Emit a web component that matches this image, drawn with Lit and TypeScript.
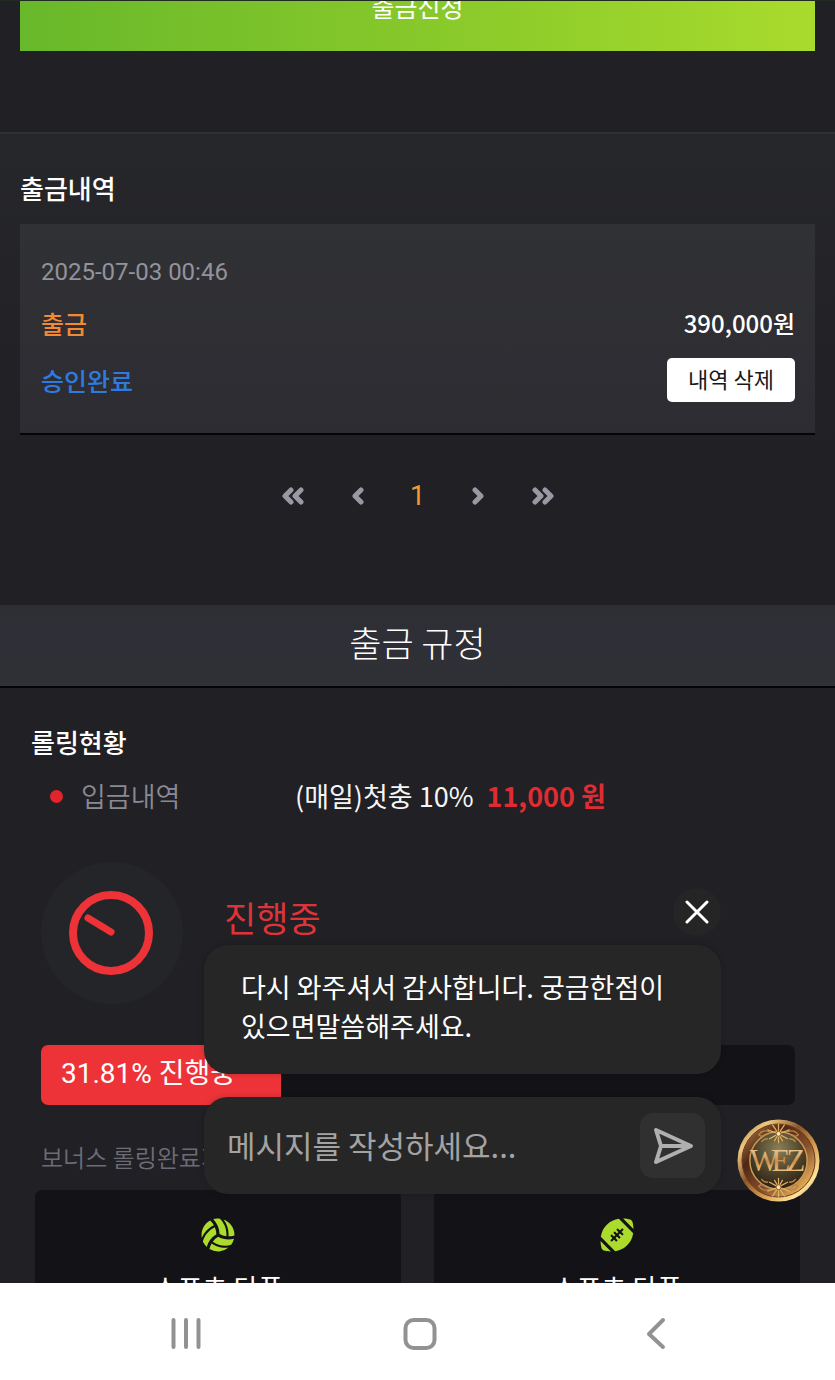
import { LitElement, html, svg, css } from "lit";
import { customElement, property } from "lit/decorators.js";

const VOLLEYBALL =
  "M231.39 243.48a285.56 285.56 0 0 0-22.7-105.7c-90.8 42.4-157.5 122.4-180.3 216.8a249 249 0 0 0 56.9 81.1 333.87 333.87 0 0 1 146.1-192.2zm-36.9-134.4a284.23 284.23 0 0 0-57.4-70.7c-91 49.8-144.8 152.9-125 262.2 33.4-83.1 98.4-152 182.4-191.5zm187.6 165.1c8.6-99.8-27.3-197.5-97.5-264.4-14.7-1.7-51.6-5.5-98.9 8.5A333.87 333.87 0 0 1 279.19 241a285 285 0 0 0 102.9 33.18zm-124.7 9.5a286.33 286.33 0 0 0-80.2 72.6c82 57.3 184.5 75.1 277.5 47.8a247.15 247.15 0 0 0 42.2-89.9 336.1 336.1 0 0 1-80.9 10.4c-54.6-.1-108.9-14.1-158.6-40.9zm-98.3 99.7c-15.2 26-25.7 54.4-32.1 84.2a247.07 247.07 0 0 0 289-22.1c-112.9 16.1-203.3-24.8-256.9-62.1zm180.3-360.6c55.3 70.4 82.5 161.2 74.6 253.6a286.59 286.59 0 0 0 89.7-14.2c0-2 .3-4 .3-6 0-107.8-68.7-199.1-164.6-233.4z";
const FOOTBALL =
  "M481.5 60.3c-4.8-18.2-19.1-32.5-37.3-37.4C420.3 16.5 383 8.9 339.4 8L496 164.8c-.8-43.5-8.2-80.6-14.5-104.5zm-467 391.4c4.8 18.2 19.1 32.5 37.3 37.4 23.9 6.4 61.2 14 104.8 14.9L0 347.2c.8 43.5 8.2 80.6 14.5 104.5zM4.2 283.4L220.4 500c132.5-19.4 248.8-118.7 271.5-271.4L275.6 12C143.1 31.4 26.8 130.7 4.2 283.4zm317.3-123.6c3.1-3.1 8.2-3.1 11.3 0l11.3 11.3c3.1 3.1 3.1 8.2 0 11.3l-28.3 28.3 28.3 28.3c3.1 3.1 3.1 8.2 0 11.3l-11.3 11.3c-3.1 3.1-8.2 3.1-11.3 0l-28.3-28.3-22.6 22.7 28.3 28.3c3.1 3.1 3.1 8.2 0 11.3l-11.3 11.3c-3.1 3.1-8.2 3.1-11.3 0L248 278.6l-22.6 22.6 28.3 28.3c3.1 3.1 3.1 8.2 0 11.3l-11.3 11.3c-3.1 3.1-8.2 3.1-11.3 0l-28.3-28.3-28.3 28.3c-3.1 3.1-8.2 3.1-11.3 0l-11.3-11.3c-3.1-3.1-3.1-8.2 0-11.3l28.3-28.3-28.3-28.2c-3.1-3.1-3.1-8.2 0-11.3l11.3-11.3c3.1-3.1 8.2-3.1 11.3 0l28.3 28.3 22.6-22.6-28.3-28.3c-3.1-3.1-3.1-8.2 0-11.3l11.3-11.3c3.1-3.1 8.2-3.1 11.3 0l28.3 28.3 22.6-22.6-28.3-28.3c-3.1-3.1-3.1-8.2 0-11.3l11.3-11.3c3.1-3.1 8.2-3.1 11.3 0l28.3 28.3z";

const chevron = (d: string, width: number) => html`
  <svg width=${width} height="18" viewBox="0 0 ${width} 18" fill="none" stroke="currentColor"
    stroke-width="5" stroke-linecap="round" stroke-linejoin="round" aria-hidden="true">
    <path d=${d} />
  </svg>`;

const reset = css`
  * { box-sizing: border-box; }
  h2, h3, p, ul, dl, dd { margin: 0; padding: 0; }
  button, input { font: inherit; border: 0; padding: 0; margin: 0; background: none; }
  button { cursor: pointer; }
  svg { display: block; }
`;

@customElement("withdraw-history")
class WithdrawHistory extends LitElement {
  static styles = [reset, css`
    :host { display: block; padding: 34px 20px 0; }
    .heading { font-size: 26px; line-height: 40px; font-weight: 500; color: #fff; }
    .card {
      display: grid; gap: 17px; margin-top: 16px; padding: 32px 20px 31px 21px;
      background: linear-gradient(#303135, #2d2c32); border-bottom: 2px solid #050508;
    }
    .row { display: flex; justify-content: space-between; align-items: center; }
    .date { font: 24px/32px Roboto, sans-serif; color: #93939b; }
    .kind, .state { font-size: 25px; line-height: 36px; font-weight: 500; }
    .kind { color: #f28a35; }
    .state { color: #2e7be0; }
    .amount { font-size: 24px; line-height: 36px; font-weight: 500; color: #fff; }
    .remove {
      padding: 2px 21px 6px; border-radius: 5px; background: #fff; color: #18181b;
      font-size: 22px; line-height: 36px;
    }
    .pages { display: flex; justify-content: center; align-items: center; padding: 41px 0 89px; }
    .page {
      display: grid; place-items: center; width: 60px; height: 40px;
      color: #9a99a3; text-decoration: none; font: 27px/40px Roboto, sans-serif;
    }
    .wide { width: 70px; }
    .current { color: #f29a35; }
  `];

  render() {
    return html`
      <h2 class="heading">출금내역</h2>
      <div class="card">
        <time class="date">2025-07-03 00:46</time>
        <div class="row"><span class="kind">출금</span><span class="amount">390,000원</span></div>
        <div class="row"><span class="state">승인완료</span><button class="remove">내역 삭제</button></div>
      </div>
      <nav class="pages" aria-label="페이지">
        <a class="page wide" href="#first" aria-label="처음">${chevron("M9 3 3 9l6 6M19 3l-6 6 6 6", 22)}</a>
        <a class="page" href="#prev" aria-label="이전">${chevron("M9 3 3 9l6 6", 12)}</a>
        <a class="page current" href="#1" aria-current="page">1</a>
        <a class="page" href="#next" aria-label="다음">${chevron("M3 3l6 6-6 6", 12)}</a>
        <a class="page wide" href="#last" aria-label="마지막">${chevron("M3 3l6 6-6 6M13 3l6 6-6 6", 22)}</a>
      </nav>`;
  }
}

@customElement("rolling-status")
class RollingStatus extends LitElement {
  @property({ type: Number }) percent = 31.81;

  static styles = [reset, css`
    :host { display: block; }
    .title {
      padding: 11px 0 18px; text-align: center; font-size: 35px; line-height: 52px; font-weight: 300;
      color: #fff; background: linear-gradient(#2e2f32, #2f2f37 50%, #303136); border-bottom: 2px solid #050508;
    }
    .body { padding: 34px 35px 0; }
    .heading { margin-left: -4px; font-size: 26px; line-height: 40px; font-weight: 500; color: #fff; }
    .deposit { display: flex; align-items: center; padding: 14px 0 0 15px; font-size: 27px; line-height: 40px; }
    .dot { width: 13px; height: 13px; border-radius: 50%; background: #e0262c; }
    .label { width: 214px; margin-left: 18px; font-weight: 350; color: #8a8994; }
    .value { color: #f5f5f5; }
    .sum { margin-left: 13px; font-weight: 700; color: #df2c33; }
    .state { display: flex; gap: 41px; padding: 46px 6px 41px; }
    .gauge { display: grid; place-items: center; width: 142px; height: 142px; border-radius: 50%; background: #242529; }
    .running { padding-top: 29px; font-size: 35px; line-height: 52px; color: #dd343a; }
    .bar { display: grid; margin: 0 5px 0 6px; height: 60px; border-radius: 7px; overflow: hidden; background: #131216; }
    .fill, .bar-text { grid-area: 1 / 1; }
    .fill { background: #ee3338; }
    .bar-text { padding: 9px 20px; font: 28px/40px Roboto, "Noto Sans CJK KR", sans-serif; color: #fff; }
    .note { padding: 34px 6px 15px; font-size: 24px; line-height: 36px; font-weight: 350; color: #6d6c75; }
    .cards { display: grid; grid-template-columns: 1fr 1fr; gap: 33px; }
    .card {
      display: grid; justify-items: center; gap: 16px; padding: 28px 0 40px;
      border-radius: 7px; background: #131216; color: #abdb2d;
    }
    .name { font-size: 27px; line-height: 40px; color: #fff; }
  `];

  render() {
    return html`
      <h2 class="title">출금 규정</h2>
      <div class="body">
        <h3 class="heading">롤링현황</h3>
        <div class="deposit">
          <i class="dot"></i><span class="label">입금내역</span>
          <span class="value">(매일)첫충 10%</span><span class="sum">11,000 원</span>
        </div>
        <div class="state">
          <div class="gauge">
            <svg width="86" height="86" viewBox="0 0 86 86" fill="none" stroke="#ee3338" aria-hidden="true">
              <circle cx="42" cy="43" r="38" stroke-width="8" />
              <path d="M19 28 42 42" stroke-width="7" stroke-linecap="round" />
            </svg>
          </div>
          <p class="running">진행중</p>
        </div>
        <div class="bar" role="progressbar" aria-valuenow=${this.percent} aria-valuemin="0" aria-valuemax="100">
          <div class="fill" style="width:${this.percent}%"></div>
          <span class="bar-text">${this.percent}% 진행중</span>
        </div>
        <p class="note">보너스 롤링완료지급</p>
        <div class="cards">
          ${[
            { name: "스포츠 단폴", box: "0 0 512 512", path: VOLLEYBALL },
            { name: "스포츠 단폴", box: "0 0 496 512", path: FOOTBALL },
          ].map((c) => html`
            <div class="card">
              <svg width="34" height="34" viewBox=${c.box} fill="currentColor" aria-hidden="true"><path d=${c.path} /></svg>
              <span class="name">${c.name}</span>
            </div>`)}
        </div>
      </div>`;
  }
}

@customElement("chat-widget")
class ChatWidget extends LitElement {
  static styles = [reset, css`
    :host { display: flex; align-items: flex-end; gap: 16px; }
    .panel { display: grid; width: 517px; justify-items: end; }
    .close {
      display: grid; place-items: center; width: 48px; height: 48px; margin-bottom: 9px;
      border-radius: 50%; background: #252525; color: #fff;
    }
    .bubble, .composer { width: 100%; border-radius: 24px; background: #262626; box-shadow: 0 0 6px rgba(0, 0, 0, 0.2); }
    .bubble { padding: 22px 37px 29px; font-size: 27px; line-height: 39px; color: #fff; }
    .composer { display: flex; align-items: center; margin-top: 23px; padding: 16px 16px 16px 23px; }
    .field { flex: 1; min-width: 0; height: 65px; padding-bottom: 3px; outline: 0; font-size: 31px; color: #fff; }
    .field::placeholder { color: #a3a3a3; opacity: 1; }
    .send { display: grid; place-items: center; width: 65px; height: 65px; border-radius: 13px; background: #303030; color: #b0b0b0; }
    .logo { margin-bottom: -8px; }
    .letters { font: 31px "Liberation Serif", serif; }
  `];

  private ornament = svg`
    <g fill="none" stroke="#e0b062" stroke-width="1.3" stroke-linecap="round">
      <path d="M42 5v19M42 15l-6-9M42 15l6-9M42 15l-11-4M42 15l11-4M42 15l-9 5M42 15l9 5M42 15l-4 7M42 15l4 7" />
      <path d="M33 13q-7-3-11 3 3 3 6 0M51 13q7-3 11 3-3 3-6 0M31 20q-4 0-6 3M53 20q4 0 6 3" stroke="#b98445" />
    </g>
    <circle cx="42" cy="15" r="2.5" fill="#fbe3a4" stroke="#6a3a16" stroke-width="0.8" />`;

  render() {
    return html`
      <div class="panel">
        <button class="close" aria-label="닫기">
          <svg width="24" height="24" viewBox="0 0 24 24" fill="none" stroke="currentColor" stroke-width="3" stroke-linecap="round">
            <path d="M2 2l20 20M22 2 2 22" />
          </svg>
        </button>
        <p class="bubble">다시 와주셔서 감사합니다. 궁금한점이 있으면말씀해주세요.</p>
        <form class="composer" @submit=${(e: Event) => e.preventDefault()}>
          <input class="field" type="text" aria-label="메시지" placeholder="메시지를 작성하세요..." />
          <button class="send" aria-label="보내기">
            <svg width="42" height="40" viewBox="0 0 42 40" fill="none" stroke="currentColor" stroke-width="4" stroke-linejoin="round" stroke-linecap="round">
              <path d="M4 4 39 20 4 36l5-16zM9 20h29" />
            </svg>
          </button>
        </form>
      </div>
      <button class="logo" aria-label="WEZ">
        <svg width="83" height="83" viewBox="0 0 84 84">
          <defs>
            <linearGradient id="rim" x1="0" y1="0" x2="1" y2="1">
              <stop offset="0" stop-color="#8a5a2a" /><stop offset="0.2" stop-color="#efc880" />
              <stop offset="0.42" stop-color="#8b562a" /><stop offset="0.62" stop-color="#d69a4c" />
              <stop offset="0.82" stop-color="#ffe49b" /><stop offset="1" stop-color="#8a541d" />
            </linearGradient>
            <linearGradient id="bevel" x1="0" y1="0" x2="1" y2="1">
              <stop offset="0" stop-color="#c08b4b" /><stop offset="0.3" stop-color="#4f2714" />
              <stop offset="0.6" stop-color="#86502d" /><stop offset="0.85" stop-color="#e0a955" />
              <stop offset="1" stop-color="#50280f" />
            </linearGradient>
            <radialGradient id="core" cx="0.5" cy="0.3" r="0.7">
              <stop offset="0" stop-color="#8b8058" /><stop offset="0.6" stop-color="#4b4229" />
              <stop offset="1" stop-color="#2c2114" />
            </radialGradient>
            <linearGradient id="gold" x1="0" y1="0" x2="0" y2="1">
              <stop offset="0" stop-color="#f8dfae" /><stop offset="0.5" stop-color="#cf8f4d" />
              <stop offset="1" stop-color="#ffe2a0" />
            </linearGradient>
          </defs>
          <circle cx="42" cy="42" r="41.5" fill="url(#rim)" />
          <circle cx="42" cy="42" r="37" fill="url(#bevel)" stroke="#6b3c1a" />
          <circle cx="42" cy="42" r="29" fill="url(#core)" stroke="#c99a5a" stroke-width="1.5" />
          ${this.ornament}
          <g transform="rotate(180 42 42)">${this.ornament}</g>
          <text class="letters" x="13 35 50" y="53" fill="url(#gold)">WEZ</text>
        </svg>
      </button>`;
  }
}

@customElement("app-root")
class AppRoot extends LitElement {
  static styles = [reset, css`
    :host {
      display: flex; flex-direction: column; height: 100vh; overflow: hidden;
      font-family: "Noto Sans CJK KR", sans-serif; background: #212025;
    }
    .screen { position: relative; flex: 1; min-height: 0; overflow: hidden; border-top: 1px solid #212b22; }
    .scrolled { margin-top: -36px; }
    .request { padding: 0 20px 81px; border-bottom: 2px solid #2f2f34; }
    .submit {
      display: block; width: 100%; padding: 23px 0 26px; color: #fff; font-size: 25px; line-height: 37px;
      background: linear-gradient(90deg, #68b82b, #8aca2a 55%, #a9db2d);
    }
    .history { background: linear-gradient(#26272b, #212025 65%); }
    .chat { position: absolute; right: 15px; bottom: 89px; z-index: 1; }
    .system {
      display: grid; grid-template-columns: repeat(3, 28%); gap: 2px; justify-content: center; align-items: center;
      height: 97px; padding: 4px 0 0 6px; background: #fff;
    }
    .key { display: grid; place-items: center; height: 60px; color: #929292; }
  `];

  render() {
    const key = (label: string, shape: unknown) => html`
      <button class="key" aria-label=${label}>
        <svg width="36" height="36" viewBox="0 0 36 36" fill="none" stroke="currentColor" stroke-width="4" stroke-linecap="round" stroke-linejoin="round">${shape}</svg>
      </button>`;
    return html`
      <main class="screen">
        <div class="scrolled">
          <section class="request"><button class="submit">출금신청</button></section>
          <withdraw-history class="history"></withdraw-history>
          <rolling-status></rolling-status>
        </div>
        <chat-widget class="chat"></chat-widget>
      </main>
      <nav class="system" aria-label="시스템">
        ${key("최근 앱", svg`<path d="M5.5 4v27M18 4v27M30.5 4v27" />`)}
        ${key("홈", svg`<rect x="3.5" y="4" width="29" height="28" rx="8" />`)}
        ${key("뒤로", svg`<path d="M26 4 12 18l14 13" />`)}
      </nav>`;
  }
}
